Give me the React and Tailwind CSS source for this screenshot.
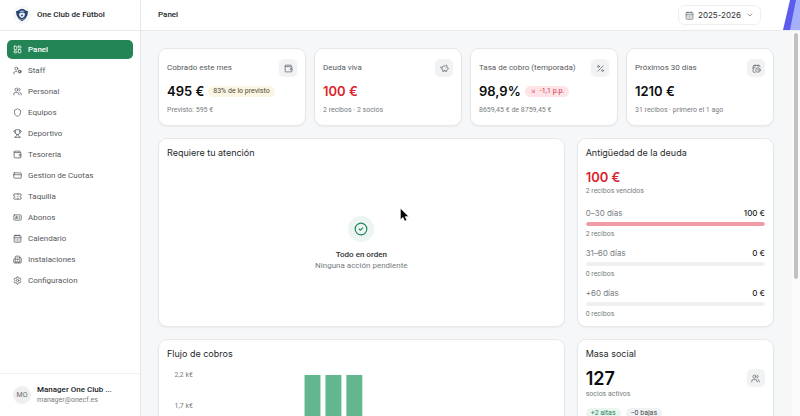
import React from "react";
import {
  ArrowDownRight,
  Building2,
  CalendarClock,
  CalendarDays,
  ChevronDown,
  CircleCheck,
  CreditCard,
  IdCard,
  LayoutDashboard,
  Percent,
  PiggyBank,
  Settings,
  Shield,
  Ticket,
  Trophy,
  UserCog,
  Users,
  Wallet,
} from "lucide-react";

const menuItems = [
  { label: "Panel", path: "#panel", icon: LayoutDashboard, active: true },
  { label: "Staff", path: "#staff", icon: UserCog },
  { label: "Personal", path: "#personal", icon: Users },
  { label: "Equipos", path: "#equipos", icon: Shield },
  { label: "Deportivo", path: "#deportivo", icon: Trophy },
  { label: "Tesoreria", path: "#tesoreria", icon: Wallet },
  { label: "Gestion de Cuotas", path: "#cuotas", icon: CreditCard },
  { label: "Taquilla", path: "#taquilla", icon: Ticket },
  { label: "Abonos", path: "#abonos", icon: IdCard },
  { label: "Calendario", path: "#calendario", icon: CalendarDays },
  { label: "Instalaciones", path: "#instalaciones", icon: Building2 },
  { label: "Configuracion", path: "#configuracion", icon: Settings },
];

const stats = [
  {
    label: "Cobrado este mes",
    value: "495 €",
    note: "Previsto: 595 €",
    icon: Wallet,
    badge: "83% de lo previsto",
    badgeClass: "bg-[#fbf6e3] text-[#4f4a3c]",
  },
  {
    label: "Deuda viva",
    value: "100 €",
    note: "2 recibos · 2 socios",
    icon: PiggyBank,
    valueClass: "text-[#dc1f2e]",
  },
  {
    label: "Tasa de cobro (temporada)",
    value: "98,9%",
    note: "8659,45 € de 8759,45 €",
    icon: Percent,
    badge: "-1,1 p.p.",
    badgeIcon: ArrowDownRight,
    badgeClass: "bg-[#fde3e6] text-[#d8324a]",
  },
  {
    label: "Próximos 30 días",
    value: "1210 €",
    note: "31 recibos · primero el 1 ago",
    icon: CalendarClock,
  },
];

const debts = [
  { range: "0–30 días", amount: "100 €", count: "2 recibos", percent: 100 },
  { range: "31–60 días", amount: "0 €", count: "0 recibos", percent: 0 },
  { range: "+60 días", amount: "0 €", count: "0 recibos", percent: 0 },
];

const Card = ({ className = "", children }) => (
  <section
    className={`rounded-[9px] border border-[#e6e8ea] bg-white shadow-xs ${className}`}
  >
    {children}
  </section>
);

const CardTitle = ({ children }) => (
  <h2 className="font-['Inter',sans-serif] text-[9px] leading-[12px] text-[#26292b]">
    {children}
  </h2>
);

const IconBox = ({ icon: Icon }) => (
  <span className="flex size-[18px] shrink-0 items-center justify-center rounded-[5px] bg-[#f1f2f3] text-[#62676b]">
    <Icon size={9} strokeWidth={2} />
  </span>
);

const ClubLogo = () => (
  <svg viewBox="0 0 18 18" className="size-[18px] shrink-0" aria-hidden="true">
    <circle cx="9" cy="9" r="8.5" fill="#f7f8f9" stroke="#eceeef" strokeWidth="0.5" />
    <path d="M3 5.2 5.4 4.6 6.6 3.4 9 2.8l2.4.6 1.2 1.2 2.4.6-.6 4-2.2 3.8L9 15.2 5.8 13 3.6 9.2z" fill="#24416f" />
    <path d="M6.6 5.3 9 4.2l2.4 1.1-.4 1.3H7z" fill="#8fa9cf" />
    <path d="M5.8 7.6 9 6.7l3.2.9-.8 3L9 12.2l-2.4-1.6z" fill="#e9eef5" />
    <path d="m9 8.4 1 .7-.4 1.1H8.4L8 9.1z" fill="#24416f" />
    <path d="M6.4 12.4 9 14l2.6-1.6" fill="none" stroke="#9db3d3" strokeWidth="0.7" />
  </svg>
);

const Sidebar = () => (
  <aside className="flex w-[141px] shrink-0 flex-col border-r border-[#e4e6e8] bg-white">
    <div className="flex h-[31px] shrink-0 items-center gap-[6px] border-b border-[#e8eaec] px-[13px]">
      <ClubLogo />
      <span className="text-[8px] font-medium">One Club de Fútbol</span>
    </div>

    <nav className="flex flex-1 flex-col gap-[2px] px-[7px] pt-[9px]">
      {menuItems.map(({ label, path, icon: Icon, active }) => (
        <a
          key={path}
          href={path}
          className={`flex h-[19px] shrink-0 items-center gap-[6px] rounded-[5px] px-[6px] text-[8px] ${
            active
              ? "bg-[#238556] font-medium text-white"
              : "text-[#55595d]"
          }`}
        >
          <Icon size={9} strokeWidth={2} />
          {label}
        </a>
      ))}
    </nav>

    <div className="flex h-[43px] shrink-0 items-center gap-[6px] border-t border-[#f0f1f2] px-[13px]">
      <span className="flex size-[18px] shrink-0 items-center justify-center rounded-full bg-[#efefef] text-[7px] text-[#666b6f]">
        MO
      </span>
      <div className="min-w-0 leading-[10px]">
        <p className="text-[8px] font-medium">Manager One Club ...</p>
        <p className="text-[7px] text-[#777c80]">manager@onecf.es</p>
      </div>
    </div>
  </aside>
);

const Header = () => (
  <header className="flex h-[31px] shrink-0 items-center border-b border-[#e8eaec] bg-white pl-[17px]">
    <h1 className="text-[8px] font-medium">Panel</h1>
    <button
      type="button"
      className="ml-auto flex h-5 w-[83px] items-center rounded-[6px] border border-[#eceeef] px-[6px] font-['Inter',sans-serif] text-[8px] text-[#303336]"
    >
      <CalendarDays size={9} className="mr-[4px] text-[#666b6f]" />
      2025-2026
      <ChevronDown size={8} className="ml-auto text-[#666b6f]" />
    </button>
    <svg viewBox="0 0 18 30" className="ml-[21px] h-[30px] w-[18px]" aria-hidden="true">
      <path d="M8 0h10v30H1z" fill="#5d5bee" />
      <path d="M14 0h4v30H8z" fill="#a5b0fb" />
    </svg>
  </header>
);

const StatCard = ({ stat }) => {
  const BadgeIcon = stat.badgeIcon;
  return (
    <Card className="px-[8px] pt-[10px] pb-[10px]">
      <div className="flex items-center justify-between">
        <h2 className="text-[8px] whitespace-nowrap text-[#55595d]">{stat.label}</h2>
        <IconBox icon={stat.icon} />
      </div>
      <div className="mt-[5px] flex items-center gap-[4px]">
        <p
          className={`font-['Inter',sans-serif] text-[13px] leading-[18px] font-semibold ${
            stat.valueClass || "text-[#0c0d0e]"
          }`}
        >
          {stat.value}
        </p>
        {stat.badge && (
          <span
            className={`flex h-[11px] items-center gap-[4px] rounded-full px-[5px] text-[7px] whitespace-nowrap ${stat.badgeClass}`}
          >
            {BadgeIcon && <BadgeIcon size={6} />}
            {stat.badge}
          </span>
        )}
      </div>
      <p className="mt-[5px] text-[7px] leading-[10px] text-[#777c80]">{stat.note}</p>
    </Card>
  );
};

const AttentionCard = () => (
  <Card className="col-span-2 flex flex-col px-[8px] pt-[8px]">
    <CardTitle>Requiere tu atención</CardTitle>
    <div className="flex flex-1 flex-col items-center justify-center pt-[2px]">
      <span className="flex size-[26px] items-center justify-center rounded-full bg-[#edf5f2] text-[#218657]">
        <CircleCheck size={14} />
      </span>
      <p className="mt-[7px] text-[8px] leading-[11px] font-medium text-[#303336]">
        Todo en orden
      </p>
      <p className="text-[8px] leading-[11px] text-[#777c80]">
        Ninguna acción pendiente
      </p>
    </div>
  </Card>
);

const DebtCard = () => (
  <Card className="px-[8px] pt-[8px] pb-[7px]">
    <CardTitle>Antigüedad de la deuda</CardTitle>
    <p className="mt-[9px] font-['Inter',sans-serif] text-[13px] leading-[18px] font-semibold text-[#dc1f2e]">
      100 €
    </p>
    <p className="text-[7px] leading-[10px] text-[#777c80]">2 recibos vencidos</p>
    <ul className="mt-[11px] flex flex-col gap-[8px]">
      {debts.map((debt) => (
        <li key={debt.range}>
          <div className="flex justify-between font-['Inter',sans-serif] text-[8px] leading-[12px]">
            <span className="text-[#777c80]">{debt.range}</span>
            <span className="font-medium">{debt.amount}</span>
          </div>
          <div className="mt-[3px] h-1 overflow-hidden rounded-full bg-[#f0f0f1]">
            <div
              className="h-full rounded-full bg-[#f09ba6]"
              style={{ width: `${debt.percent}%` }}
            />
          </div>
          <p className="mt-[3px] text-[7px] leading-[10px] text-[#777c80]">{debt.count}</p>
        </li>
      ))}
    </ul>
  </Card>
);

const CashFlowCard = () => (
  <Card className="col-span-2 px-[8px] pt-[8px]">
    <CardTitle>Flujo de cobros</CardTitle>
    <svg
      viewBox="0 0 390 136"
      className="mt-[6px] w-full"
      role="img"
      aria-label="Flujo de cobros"
    >
      <g fill="#777c80" fontSize="7" textAnchor="end">
        <text x="26" y="11">2,2 k€</text>
        <text x="26" y="42">1,7 k€</text>
      </g>
      <g fill="#63b78e">
        <rect x="138" y="9" width="16" height="124" />
        <rect x="159" y="9" width="16" height="124" />
        <rect x="180" y="9" width="16" height="124" />
      </g>
    </svg>
  </Card>
);

const MembersCard = () => (
  <Card className="px-[8px] pt-[8px] pb-[8px]">
    <CardTitle>Masa social</CardTitle>
    <div className="mt-[9px] flex items-start justify-between">
      <div>
        <p className="font-['Inter',sans-serif] text-[18px] leading-[20px] font-semibold text-[#0c0d0e]">
          127
        </p>
        <p className="text-[7px] leading-[10px] text-[#777c80]">socios activos</p>
      </div>
      <IconBox icon={Users} />
    </div>
    <div className="mt-[9px] flex gap-[5px] text-[7px]">
      <span className="flex h-[11px] items-center rounded-full bg-[#e9f5ef] px-[5px] text-[#218657]">
        +2 altas
      </span>
      <span className="flex h-[11px] items-center rounded-full bg-[#f1f2f3] px-[5px] text-[#44484b]">
        −0 bajas
      </span>
    </div>
  </Card>
);

const Cursor = () => (
  <svg
    viewBox="0 0 10 14"
    className="pointer-events-none absolute top-1/2 left-1/2 h-[14px] w-[10px]"
    aria-hidden="true"
  >
    <path d="M.5.5v11L3 9.200l1.700 3.800 2-.9L5 8.500h3.600z" fill="#050505" stroke="#fff" strokeWidth="0.4" />
  </svg>
);

const App = () => {
  return (
    <div className="relative flex h-screen overflow-hidden bg-[#f6f7f9] font-['Roboto','Liberation_Sans',sans-serif] text-[#1b1d1f]">
      <Sidebar />
      <div className="flex min-w-0 flex-1 flex-col">
        <Header />
        <div className="flex min-h-0 flex-1">
          <main className="flex min-w-0 flex-1 flex-col gap-[12px] overflow-hidden py-[17px] pr-[18px] pl-[17px]">
            <div className="grid shrink-0 grid-cols-4 gap-2">
              {stats.map((stat) => (
                <StatCard key={stat.label} stat={stat} />
              ))}
            </div>
            <div className="grid shrink-0 grid-cols-3 gap-[12px]">
              <AttentionCard />
              <DebtCard />
              <CashFlowCard />
              <MembersCard />
            </div>
          </main>
          <div className="flex w-2 shrink-0 justify-center bg-[#fafafa] pt-[2px]">
            <div className="h-[246px] w-1 rounded-full bg-[#c1c1c1]" />
          </div>
        </div>
      </div>
      <Cursor />
    </div>
  );
};

export default App;
